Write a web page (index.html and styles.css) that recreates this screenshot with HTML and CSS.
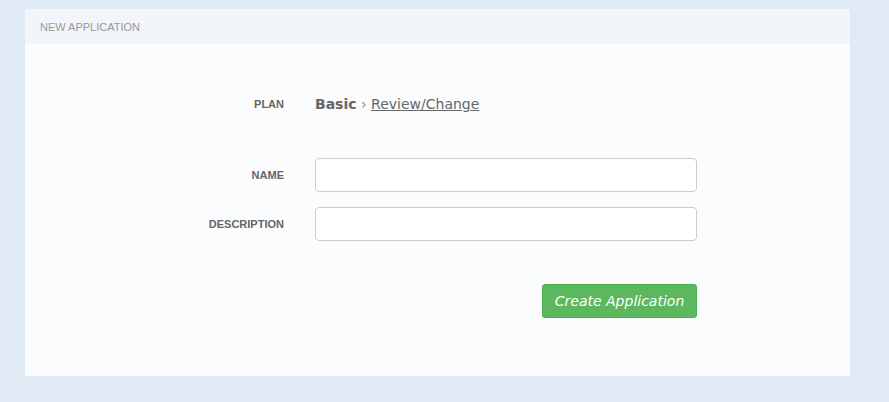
FILE: index.html
```html
<!DOCTYPE html>
<html>
<head>
<meta charset="utf-8">
<link rel="stylesheet" href="styles.css">
</head>
<body>
<div class="card">
  <div class="card-header">NEW APPLICATION</div>
  <div class="card-body">
    <div class="row plan-row">
      <div class="label">PLAN</div>
      <div class="value"><span class="plan-name">Basic</span> <span class="sep">›</span> <a class="link" href="#">Review/Change</a></div>
    </div>
    <div class="row name-row">
      <div class="label">NAME</div>
      <input class="input" type="text">
    </div>
    <div class="row desc-row">
      <div class="label">DESCRIPTION</div>
      <input class="input" type="text">
    </div>
    <div class="row actions">
      <div></div>
      <div class="btn-wrap"><button class="btn">Create Application</button></div>
    </div>
  </div>
</div>
</body>
</html>
```
FILE: styles.css
```css
html, body {
  margin: 0;
  padding: 0;
}
body {
  background: #dfeaf5;
  padding: 9px 39px 26px 25px;
  font-family: "DejaVu Sans", sans-serif;
}
.card {
  background: #fbfcfe;
  border-radius: 3px;
  overflow: hidden;
  height: 367px;
  display: flex;
  flex-direction: column;
}
.card-header {
  background: #f2f6fa;
  height: 35px;
  box-sizing: border-box;
  padding: 0 15px;
  display: flex;
  align-items: center;
  font-family: "Liberation Sans", Arial, sans-serif;
  font-size: 11px;
  color: #999;
}
.card-body {
  padding-top: 43px;
}
.row {
  display: grid;
  grid-template-columns: 259px 382px;
  column-gap: 31px;
  align-items: center;
}
.plan-row {
  height: 34px;
}
.name-row {
  margin-top: 37px;
}
.desc-row {
  margin-top: 15px;
}
.actions {
  margin-top: 43px;
}
.label {
  text-align: right;
  font-family: "Liberation Sans", Arial, sans-serif;
  font-weight: bold;
  font-size: 11px;
  color: #666;
}
.value {
  font-size: 14px;
  color: #666;
}
.plan-name {
  font-weight: bold;
}
.sep {
  color: #888;
}
.link {
  color: #666;
  text-decoration: underline;
}
.input {
  display: block;
  box-sizing: border-box;
  width: 382px;
  height: 34px;
  border: 1px solid #ccc;
  border-radius: 4px;
  background: #fff;
  margin: 0;
}
.btn-wrap {
  display: flex;
  justify-content: flex-end;
}
.btn {
  box-sizing: border-box;
  width: 155px;
  height: 34px;
  background: #5cb85c;
  border: 1px solid #4cae4c;
  border-radius: 3px;
  color: #fff;
  font-family: "DejaVu Sans", sans-serif;
  font-style: italic;
  font-size: 14px;
  padding: 0;
}
```
